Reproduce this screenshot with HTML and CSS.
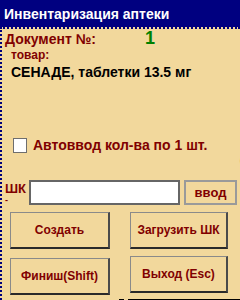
FILE: index.html
```html
<!DOCTYPE html>
<html lang="ru">
<head>
<meta charset="UTF-8">
<meta name="viewport" content="width=device-width, initial-scale=1.0">
<title>Инвентаризация аптеки</title>
<link rel="stylesheet" href="styles.css">
</head>
<body>

<div class="titlebar">Инвентаризация аптеки</div>

<div class="frame">
  <div class="doc-row">
    <span class="doc-label">Документ №:</span>
    <span class="doc-num">1</span>
  </div>
  <div class="item-label">товар:</div>
  <div class="item-name">СЕНАДЕ, таблетки 13.5 мг</div>

  <label class="auto-row">
    <input type="checkbox" class="auto-check">
    <span>Автоввод кол-ва по 1 шт.</span>
  </label>
  <div class="edge-mark">(</div>

  <div class="barcode-row">
    <div class="barcode-label">
      <div>ШК</div>
      <div class="dash">-</div>
    </div>
    <input type="text" class="barcode-input">
    <button class="btn btn-enter">ввод</button>
  </div>

  <div class="buttons">
    <button class="btn">Создать</button>
    <button class="btn">Загрузить ШК</button>
    <button class="btn btn-low">Финиш(Shift)</button>
    <button class="btn">Выход (Esc)</button>
  </div>

  <div class="bottom-edge"></div>
</div>

</body>
</html>
```

FILE: styles.css
```css
body {
  font-family: Tahoma, 'Liberation Sans', Arial, sans-serif;
  font-weight: bold;
  background-color: #f2d89c;
  margin: 0;
  padding: 0;
  width: 240px;
  height: 300px;
  overflow: hidden;
}

.titlebar {
  height: 27px;
  line-height: 28px;
  padding-left: 4px;
  background-color: #000080;
  color: #ffffff;
  font-size: 14px;
}

.frame {
  height: 271px;
  border-top: 2px dotted #00007a;
  border-left: 2px dotted #00007a;
  position: relative;
}

.doc-row {
  display: flex;
  align-items: baseline;
  height: 17px;
  line-height: 18px;
  padding-left: 3px;
}

.doc-label {
  color: #800000;
  font-size: 14px;
}

.doc-num {
  color: #008000;
  font-size: 18px;
  margin-left: 49px;
}

.item-label {
  color: #800000;
  font-size: 12px;
  line-height: 14px;
  padding: 2px 0 0 9px;
}

.item-name {
  color: #000000;
  font-size: 14px;
  line-height: 16px;
  padding: 2px 0 0 9px;
}

.auto-row {
  display: flex;
  align-items: center;
  gap: 6px;
  height: 16px;
  margin: 57px 0 0 11px;
  color: #800000;
  font-size: 14px;
}

.auto-check {
  appearance: none;
  width: 14px;
  height: 15px;
  margin: 0;
  background-color: #ffffff;
  border: 1px solid #6e6e6e;
}

.edge-mark {
  position: absolute;
  right: -3px;
  top: 126px;
  font-size: 10px;
  color: #000000;
}

.barcode-row {
  display: flex;
  align-items: flex-start;
  margin-top: 27px;
  padding-left: 3px;
}

.barcode-label {
  width: 24px;
  color: #800000;
  font-size: 13px;
  line-height: 14px;
  padding-top: 2px;
}

.barcode-label .dash {
  font-size: 9px;
  line-height: 8px;
}

.barcode-input {
  width: 151px;
  height: 25px;
  margin: 0;
  box-sizing: border-box;
  border: 2px solid #666666;
  background-color: #ffffff;
}

.btn {
  font-family: inherit;
  font-weight: bold;
  font-size: 12px;
  color: #800000;
  background-color: #f2d89c;
  border: 1px solid #8a8a8a;
  border-right: 2px solid #4a4a4a;
  border-bottom: 2px solid #2a2a2a;
  padding: 0;
  box-sizing: border-box;
}

.btn-enter {
  width: 53px;
  height: 25px;
  margin-left: 4px;
  font-size: 13px;
  border-color: #9a9a9a;
  border-width: 2px;
}

.buttons {
  display: grid;
  grid-template-columns: 100px 98px;
  column-gap: 20px;
  row-gap: 7px;
  padding: 7px 0 0 8px;
}

.buttons .btn {
  height: 37px;
}

.btn-low {
  margin-top: 2px;
}

.bottom-edge {
  position: absolute;
  left: 117px;
  right: 0;
  bottom: 0;
  height: 1px;
  background: linear-gradient(to right, #000 0 5px, transparent 5px 9px, #000 9px);
}
```
